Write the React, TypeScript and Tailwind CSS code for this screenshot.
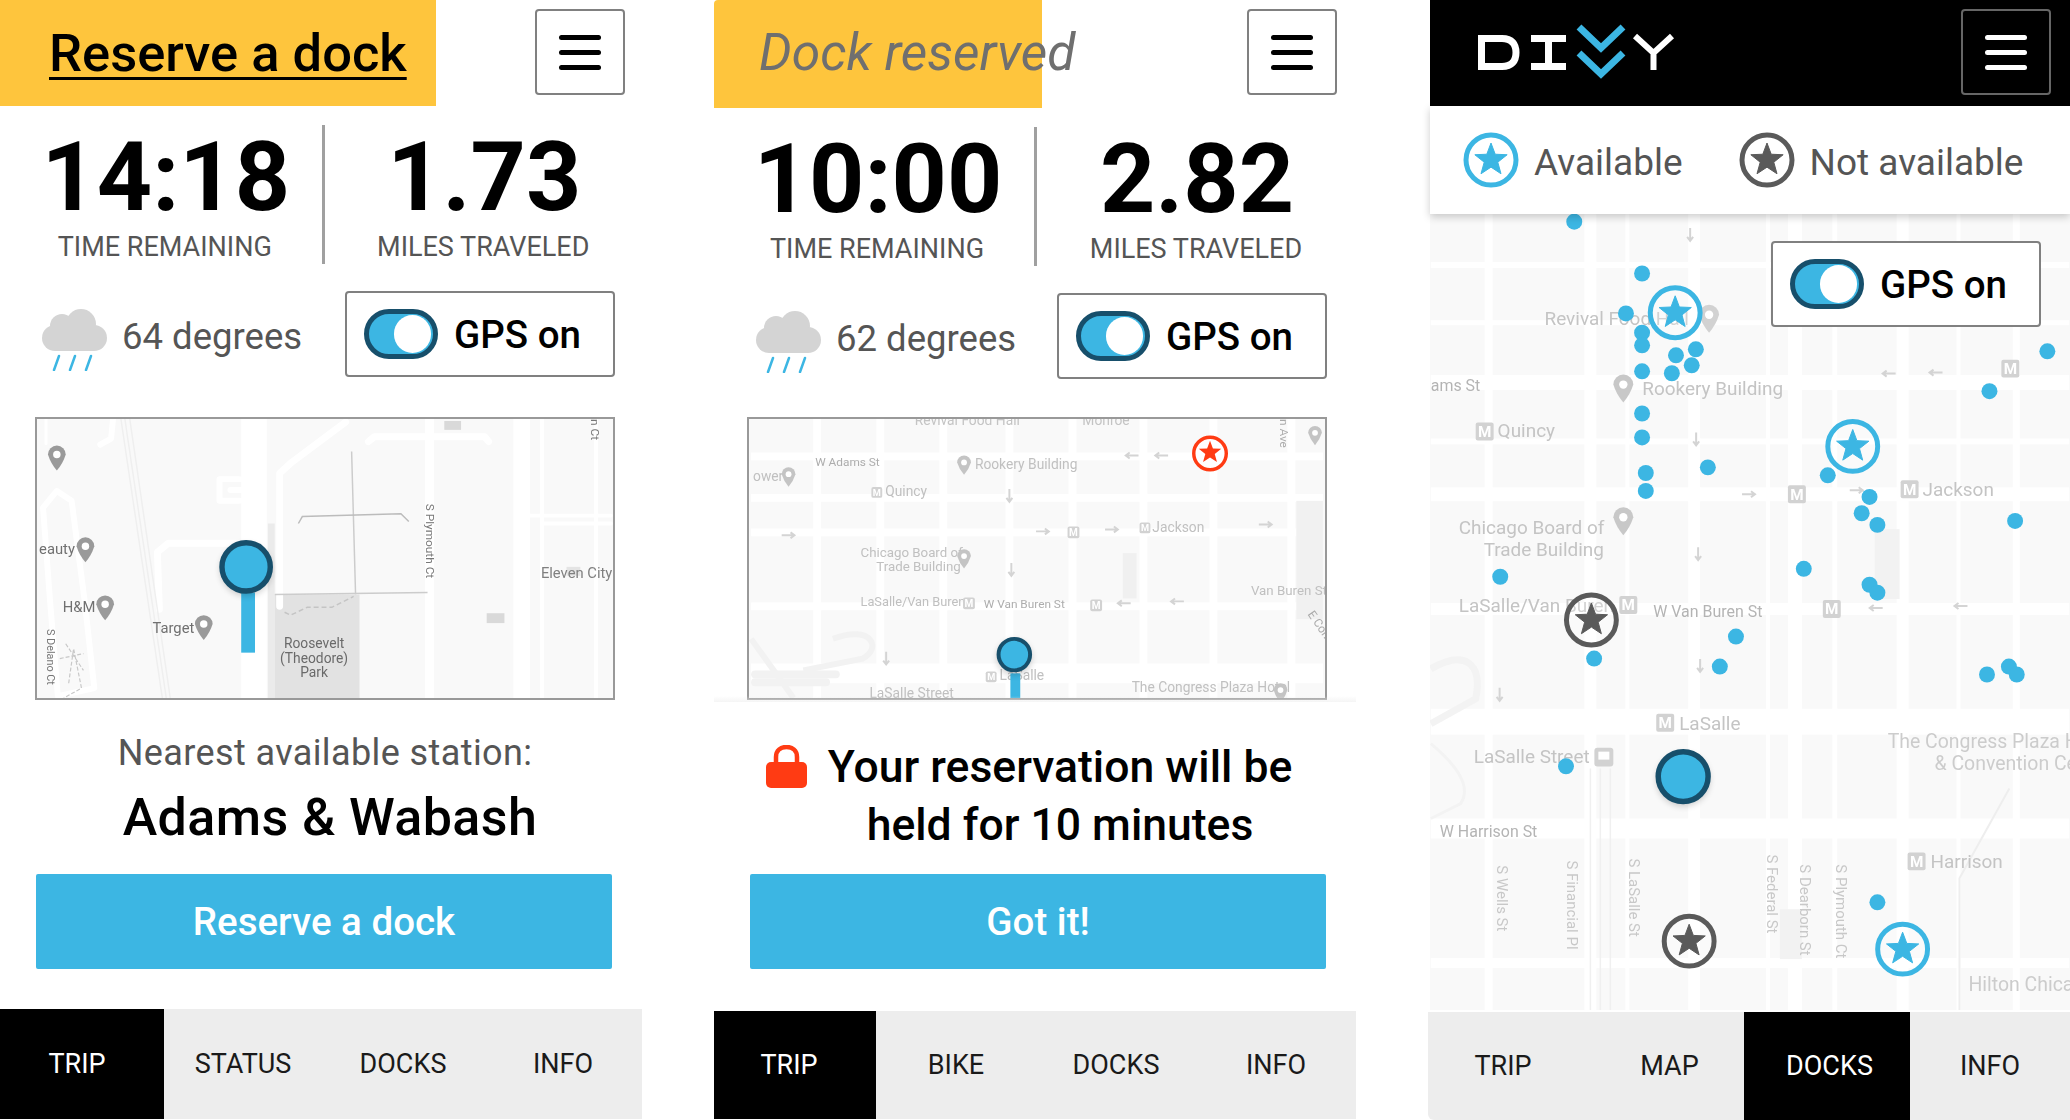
import React from "react";

const BLUE = "#3cb6e3";
const DARK = "#174f6b";
const GRAY = "#5a5a5a";

const starPts = (cx: number, cy: number, R: number) => {
  const pts: string[] = [];
  for (let i = 0; i < 10; i++) {
    const r = i % 2 === 0 ? R : R * 0.42;
    const a = -Math.PI / 2 + (i * Math.PI) / 5;
    pts.push(`${cx + r * Math.cos(a)},${cy + r * Math.sin(a)}`);
  }
  return pts.join(" ");
};

function Ring({ cx, cy, color, r = 25, sw = 5 }: { cx: number; cy: number; color: string; r?: number; sw?: number }) {
  return (
    <g>
      <circle cx={cx} cy={cy} r={r} fill="#ffffff" fillOpacity={0.25} stroke={color} strokeWidth={sw} />
      <polygon points={starPts(cx, cy, r * 0.68)} fill={color} strokeLinejoin="round" stroke={color} strokeWidth={1} />
    </g>
  );
}

function Hamburger({ dark = false, className = "" }: { dark?: boolean; className?: string }) {
  const line = dark ? "bg-white" : "bg-black";
  return (
    <div className={`w-[90px] h-[86px] rounded-[4px] border-[2.5px] flex flex-col items-center justify-center gap-[10px] ${dark ? "border-[#666666]" : "border-[#808080]"} ${className}`}>
      <div className={`w-[42px] h-[5px] rounded-full ${line}`} />
      <div className={`w-[42px] h-[5px] rounded-full ${line}`} />
      <div className={`w-[42px] h-[5px] rounded-full ${line}`} />
    </div>
  );
}

function Stats({ t, m, className = "" }: { t: string; m: string; className?: string }) {
  return (
    <div className={`flex mt-[19px] h-[139px] ${className}`}>
      <div className="w-[314px] pt-[12px] text-center">
        <div className="pl-[2px] text-[96.5px] leading-[80px] font-bold text-black">{t}</div>
        <div className="mt-[15px] text-[27px] leading-[30px] text-[#555555]">TIME REMAINING</div>
      </div>
      <div className="w-[3px] h-[139px] bg-[#a0a0a0]" />
      <div className="w-[318px] pt-[12px] text-center">
        <div className="pl-[2px] text-[96.5px] leading-[80px] font-bold text-black">{m}</div>
        <div className="mt-[15px] text-[27px] leading-[30px] text-[#555555]">MILES TRAVELED</div>
      </div>
    </div>
  );
}

function Toggle() {
  return (
    <div className="relative w-[74px] h-[50px] rounded-full border-[5px] border-[#174f6b] bg-[#3cb6e3]">
      <div className="absolute right-[2px] top-[1px] w-[37px] h-[38px] rounded-full bg-white" />
    </div>
  );
}

function GpsBox({ className = "" }: { className?: string }) {
  return (
    <div className={`w-[270px] h-[86px] rounded-[4px] border-[2.5px] border-[#808080] bg-white flex items-center pl-[17px] gap-[16px] ${className}`}>
      <Toggle />
      <span className="pt-[2px] text-[38.5px] leading-none font-medium text-black whitespace-nowrap">GPS on</span>
    </div>
  );
}

function Weather({ deg, boxClass }: { deg: string; boxClass: string }) {
  return (
    <div className="flex items-center mt-[27px] h-[86px]">
      <svg width="65" height="62" viewBox="0 0 65 62" className="ml-[42px] mt-[11px]">
        <circle cx="20" cy="17" r="12" fill="#d4d4d4" />
        <circle cx="39" cy="15" r="15" fill="#d4d4d4" />
        <rect x="0" y="16" width="65" height="26" rx="13" fill="#d4d4d4" />
        <path d="M17 47 L12 61 M33 47 L28 61 M49 47 L44 61" stroke={BLUE} strokeWidth="2.5" strokeLinecap="round" />
      </svg>
      <span className="ml-[15px] mt-[7px] text-[36.5px] leading-none text-[#555555] whitespace-nowrap">{deg}</span>
      <div className="flex-1" />
      <GpsBox className={boxClass} />
    </div>
  );
}

type Tab = { label: string; cls: string; active?: boolean };
function Nav({ tabs, className = "" }: { tabs: Tab[]; className?: string }) {
  return (
    <div className={`flex bg-[#ededed] rounded-bl-[6px] h-[108px] ${className}`}>
      {tabs.map((t) => (
        <div key={t.label} className={`flex items-center justify-center text-[27px] leading-none ${t.active ? "bg-black text-white" : "text-[#1a1a1a]"} ${t.cls}`}>
          {t.label}
        </div>
      ))}
    </div>
  );
}

function L({ x, y, s = 18, c = "#c4c4c4", w = 400, children, anchor }: { x: number; y: number; s?: number; c?: string; w?: number; children: React.ReactNode; anchor?: "middle" }) {
  return (
    <text x={x} y={y} fontSize={s} fill={c} fontWeight={w} textAnchor={anchor}>
      {children}
    </text>
  );
}
function V({ x, y, s = 15, c = "#c8c8c8", children }: { x: number; y: number; s?: number; c?: string; children: React.ReactNode }) {
  return (
    <text transform={`translate(${x} ${y}) rotate(90)`} fontSize={s} fill={c}>
      {children}
    </text>
  );
}
function M({ x, y, s = 18 }: { x: number; y: number; s?: number }) {
  return (
    <g>
      <rect x={x} y={y} width={s} height={s} rx={2} fill="#d2d2d2" />
      <text x={x + s / 2} y={y + s * 0.8} fontSize={s * 0.85} fontWeight={700} fill="#ffffff" textAnchor="middle">M</text>
    </g>
  );
}
function Poi({ x, y, r = 9, c = "#9a9a9a" }: { x: number; y: number; r?: number; c?: string }) {
  return (
    <g>
      <path d={`M${x - r} ${y} A${r} ${r} 0 1 1 ${x + r} ${y} Q${x + r * 0.7} ${y + r} ${x} ${y + r * 1.8} Q${x - r * 0.7} ${y + r} ${x - r} ${y} Z`} fill={c} />
      <circle cx={x} cy={y} r={r * 0.42} fill="#ffffff" />
    </g>
  );
}
function Arrow({ x, y, d }: { x: number; y: number; d: "l" | "r" | "d" }) {
  const p =
    d === "l"
      ? `M${x + 7} ${y} H${x - 6} M${x - 2} ${y - 3} L${x - 6} ${y} L${x - 2} ${y + 3}`
      : d === "r"
      ? `M${x - 7} ${y} H${x + 6} M${x + 2} ${y - 3} L${x + 6} ${y} L${x + 2} ${y + 3}`
      : `M${x} ${y - 7} V${y + 6} M${x - 3} ${y + 2} L${x} ${y + 6} L${x + 3} ${y + 2}`;
  return <path d={p} stroke="#d4d4d4" strokeWidth={2} fill="none" />;
}
function Pin({ cx, cy, r, sw }: { cx: number; cy: number; r: number; sw: number }) {
  return (
    <g>
      <circle cx={cx} cy={cy + 3} r={r + 2} fill="#000000" opacity={0.18} className="blur-[3px]" />
      <circle cx={cx} cy={cy} r={r} fill={BLUE} stroke={DARK} strokeWidth={sw} />
    </g>
  );
}

function Map1() {
  const road = { stroke: "#ffffff", fill: "none", strokeLinejoin: "round" as const, strokeLinecap: "round" as const };
  return (
    <svg viewBox="35 417 580 283" className="block w-full h-full bg-[#f9f9f9]">
      <g className="blur-[0.4px]">
        <rect x="240" y="417" width="26" height="283" fill="#ffffff" />
        <rect x="267" y="523" width="7" height="177" fill="#ebebeb" />
        <rect x="274" y="595" width="86" height="105" fill="#e2e2e2" />
        <path d="M279 607 V472 L290 462 L346 420" {...road} strokeWidth="7" />
        <path d="M157 610 L155 552 L166 543 H240" {...road} strokeWidth="7" />
        <path d="M238 478 H218 V500 H238 M229 489 H240" {...road} strokeWidth="6" />
        <path d="M110 417 L108 437 L97 443" {...road} strokeWidth="6" />
        <path d="M42 417 V442" {...road} strokeWidth="3" />
        <path d="M39 507 L53 490 L68 500 L81 600 L91 690 L54 698 L46 600 Z" {...road} strokeWidth="6" />
        <path d="M118 417 L160 700 M122 417 L164 700 M127 417 L168 700" stroke="#efefef" strokeWidth="1.5" fill="none" />
        <path d="M431 417 V700" {...road} strokeWidth="9" />
        <path d="M369 440 L375 435 H487 L491 440" {...road} strokeWidth="7" />
        <rect x="516" y="417" width="17" height="283" fill="#ffffff" />
        <path d="M545 417 V700 M600 417 V700" {...road} strokeWidth="4" />
        <path d="M533 515 H615 M545 523 H615" {...road} strokeWidth="4" />
        <path d="M352 450 L356 595 M274 595 L429 593" stroke="#cccccc" strokeWidth="1.5" fill="none" />
        <path d="M298 523 L302 516 L402 513 L410 521" stroke="#bcbcbc" strokeWidth="1.5" fill="none" />
        <path d="M284 613 L290 616 L307 608 L332 608 L354 597" stroke="#c4c4c4" strokeWidth="1.5" strokeDasharray="5 3" fill="none" />
        <path d="M62 645 L80 672 M56 660 L80 655 M65 685 L70 650 L78 690 L60 700" stroke="#c8c8c8" strokeWidth="1.2" strokeDasharray="4 2" fill="none" />
        <rect x="446" y="419" width="17" height="9" fill="#d9d9d9" />
        <rect x="489" y="614" width="18" height="10" fill="#d9d9d9" />
        <rect x="570" y="567" width="14" height="9" fill="#e4e4e4" />
        <Poi x={53} y={453} r={9} />
        <Poi x={82} y={546} r={9} />
        <Poi x={102} y={605} r={9} />
        <Poi x={202} y={625} r={9} />
        <L x={35} y={554} s={15} c="#707070">eauty</L>
        <L x={59} y={613} s={15} c="#707070">H&amp;M</L>
        <L x={150} y={634} s={15} c="#707070">Target</L>
        <L x={314} y={649} s={14} c="#6a6a6a" anchor="middle">Roosevelt</L>
        <L x={314} y={664} s={14} c="#6a6a6a" anchor="middle">(Theodore)</L>
        <L x={314} y={679} s={14} c="#6a6a6a" anchor="middle">Park</L>
        <L x={544} y={578} s={15} c="#808080">Eleven City</L>
        <V x={43} y={630} s={11} c="#777777">S Delano Ct</V>
        <V x={427} y={503} s={12} c="#777777">S Plymouth Ct</V>
        <V x={595} y={417} s={12} c="#777777">n Ct</V>
      </g>
      <rect x="240" y="593" width="14" height="61" fill={BLUE} />
      <Pin cx={245} cy={567} r={24.5} sw={5.5} />
    </svg>
  );
}

function Map2() {
  const h = [455, 497, 532, 607, 675];
  const v = [814, 878, 942, 1009, 1073, 1145, 1216, 1295];
  return (
    <svg viewBox="747 417 580 283" className="block w-full h-full bg-[#f9f9f9]">
      <g className="blur-[0.3px]">
        {h.map((y, i) => (
          <rect key={y} x="747" y={y - (i === 4 ? 10 : 4)} width="580" height={i === 4 ? 20 : 8} fill="#ffffff" />
        ))}
        {v.map((x) => (
          <rect key={x} x={x - 4} y="417" width="8" height="283" fill="#ffffff" />
        ))}
        <rect x="1124" y="553" width="14" height="46" fill="#f0f0f0" />
        <path d="M747 640 L790 700 M830 640 C870 625 880 650 860 660 L800 672" stroke="#f2f2f2" strokeWidth="6" fill="none" />
        <rect x="747" y="672" width="90" height="8" rx="4" fill="#f2f2f2" />
        <rect x="747" y="680" width="80" height="8" rx="4" fill="#f2f2f2" />
        <rect x="1300" y="500" width="27" height="120" fill="#f1f1f1" />
        <L x={913} y={423} s={14} c="#c4c4c4">Revival Food Hall</L>
        <L x={1083} y={423} s={14} c="#c4c4c4">Monroe</L>
        <L x={812} y={465} s={12} c="#adadad">W Adams St</L>
        <L x={749} y={480} s={14} c="#c0c0c0">ower</L>
        <L x={974} y={468} s={14} c="#c0c0c0">Rookery Building</L>
        <L x={883} y={495} s={14} c="#c0c0c0">Quincy</L>
        <L x={1154} y={532} s={14} c="#c0c0c0">Jackson</L>
        <L x={858} y={557} s={13.5} c="#c0c0c0">Chicago Board of</L>
        <L x={874} y={571} s={13.5} c="#c0c0c0">Trade Building</L>
        <L x={858} y={607} s={13} c="#c0c0c0">LaSalle/Van Buren</L>
        <L x={983} y={609} s={12} c="#adadad">W Van Buren St</L>
        <L x={1254} y={596} s={13.5} c="#c0c0c0">Van Buren St</L>
        <L x={999} y={682} s={14} c="#c0c0c0">LaSalle</L>
        <L x={1133} y={694} s={14} c="#c0c0c0">The Congress Plaza Hotel</L>
        <L x={867} y={700} s={14} c="#c0c0c0">LaSalle Street</L>
        <V x={1283} y={417} s={12} c="#aaaaaa">n Ave</V>
        <text transform="translate(1311 615) rotate(55)" fontSize={12} fill="#aaaaaa">E Con</text>
        <M x={869} y={486} s={11} />
        <M x={1068} y={526} s={12} />
        <M x={1141} y={522} s={11} />
        <M x={962} y={598} s={12} />
        <M x={1091} y={600} s={12} />
        <M x={985} y={673} s={11} />
        <Poi x={963} y={461} r={7} c="#c4c4c4" />
        <Poi x={785} y={473} r={7} c="#c4c4c4" />
        <Poi x={963} y={556} r={7} c="#c4c4c4" />
        <Poi x={1319} y={431} r={7} c="#c4c4c4" />
        <Poi x={1284} y={692} r={7} c="#c4c4c4" />
        <Arrow x={1133} y={454} d="l" />
        <Arrow x={1163} y={454} d="l" />
        <Arrow x={785} y={535} d="r" />
        <Arrow x={1043} y={531} d="r" />
        <Arrow x={1113} y={529} d="r" />
        <Arrow x={1269} y={524} d="r" />
        <Arrow x={1009} y={495} d="d" />
        <Arrow x={1011} y={570} d="d" />
        <Arrow x={884} y={660} d="d" />
        <Arrow x={1125} y={604} d="l" />
        <Arrow x={1179} y={602} d="l" />
      </g>
      <circle cx="1212.5" cy="452" r="16.5" fill="#ffffff" stroke="#ff3b13" strokeWidth="3.5" />
      <polygon points={starPts(1212.5, 451, 12)} fill="#ff3b13" />
      <rect x="1010" y="675" width="10" height="25" fill={BLUE} />
      <Pin cx={1014} cy={656} r={16} sw={4} />
    </svg>
  );
}

const z4 = [[371,665],[535,821],[496,941],[535,999],[535,1037],[617,1067],[665,1049],[655,1097],[535,1115],[607,1121],[1515,1055],[1375,1175]];
const z5 = [[535,42],[535,114],[544,221],[544,275],[694,204],[984,228],[1085,293],[1066,342],[1104,377],[1437,365],[192,533],[926,509],[1085,557],[1104,581],[762,713],[723,803],[419,779],[1369,827],[1422,803],[1441,827],[351,1103]];
const dots = [
  ...z4.map(([x, y]) => [1420 + x / 2.412, y / 3]),
  ...z5.map(([x, y]) => [1420 + x / 2.412, 400 + y / 3]),
  [1420 + 1104 / 2.412, 780 + 372 / 3],
];

function Map3() {
  const hs: [number, number][] = [[265, 6], [323, 5], [383, 15], [442, 6], [495, 14], [610, 12], [723, 26], [830, 20], [965, 10]];
  const vs: [number, number][] = [[1488, 8], [1590, 12], [1627, 4], [1694, 12], [1768, 4], [1795, 14], [1835, 5], [1903, 12], [1959, 4], [2017, 7]];
  return (
    <svg viewBox="1430 214 640 798" className="block w-full h-full bg-[#f9f9f9]">
      <g className="blur-[0.3px]">
        {hs.map(([y, t]) => (
          <rect key={y} x="1430" y={y - t / 2} width="640" height={t} fill="#ffffff" />
        ))}
        {vs.map(([x, t]) => (
          <rect key={x} x={x - t / 2} y="214" width={t} height="798" fill="#ffffff" />
        ))}
        <rect x="1875" y="530" width="25" height="70" fill="#f2f2f2" />
        <rect x="1780" y="911" width="22" height="50" fill="#f2f2f2" />
        <path d="M1430 670 C1465 650 1482 665 1475 700 L1430 725" stroke="#f3f3f3" strokeWidth="7" fill="none" />
        <path d="M1430 745 C1460 770 1470 790 1460 805 L1430 820" stroke="#f3f3f3" strokeWidth="3" fill="none" />
        <path d="M1590 770 V1012 M1600 770 V1012 M1610 770 V1012" stroke="#f0f0f0" strokeWidth="1.5" />
        <path d="M1960 1012 V880 L2010 790" stroke="#eeeeee" strokeWidth="2" fill="none" />
        <L x={1544} y={325} s={19}>Revival Food Hall</L>
        <L x={1642} y={395} s={19}>Rookery Building</L>
        <L x={1430} y={391} s={16} c="#b4b4b4">ams St</L>
        <L x={1497} y={438} s={19}>Quincy</L>
        <L x={1458} y={535} s={19}>Chicago Board of</L>
        <L x={1483} y={557} s={19}>Trade Building</L>
        <L x={1458} y={613} s={19}>LaSalle/Van Buren</L>
        <L x={1653} y={618} s={16} c="#b4b4b4">W Van Buren St</L>
        <L x={1923} y={497} s={19}>Jackson</L>
        <L x={1679} y={731} s={19}>LaSalle</L>
        <L x={1888} y={749} s={19.5} c="#cccccc">The Congress Plaza Hotel</L>
        <L x={1935} y={771} s={19.5} c="#cccccc">&amp; Convention Center</L>
        <L x={1473} y={764} s={19}>LaSalle Street</L>
        <L x={1439} y={839} s={16} c="#b4b4b4">W Harrison St</L>
        <L x={1931} y={870} s={19}>Harrison</L>
        <L x={1969} y={993} s={19.5} c="#cccccc">Hilton Chicago</L>
        <V x={1496} y={867}>S Wells St</V>
        <V x={1567} y={862}>S Financial Pl</V>
        <V x={1629} y={860}>S LaSalle St</V>
        <V x={1767} y={856}>S Federal St</V>
        <V x={1800} y={866}>S Dearborn St</V>
        <V x={1836} y={866}>S Plymouth Ct</V>
        <M x={1475} y={423} />
        <M x={1901} y={481} />
        <M x={1788} y={486} />
        <M x={1619} y={597} />
        <M x={1823} y={601} />
        <M x={1656} y={715} />
        <M x={1908} y={854} />
        <M x={2002} y={360} />
        <rect x="1594" y="749" width="19" height="19" rx="3" fill="#d2d2d2" />
        <rect x="1598" y="753" width="11" height="8" fill="#ffffff" />
        <Poi x={1623} y={518} r={10} c="#c8c8c8" />
        <Poi x={1709} y={315} r={10} c="#d2d2d2" />
        <Poi x={1623} y={385} r={10} c="#c8c8c8" />
        <Arrow x={1690} y={235} d="d" />
        <Arrow x={1696} y={440} d="d" />
        <Arrow x={1698} y={555} d="d" />
        <Arrow x={1700} y={667} d="d" />
        <Arrow x={1499} y={696} d="d" />
        <Arrow x={1889} y={374} d="l" />
        <Arrow x={1936} y={373} d="l" />
        <Arrow x={1749} y={495} d="r" />
        <Arrow x={1857} y={491} d="r" />
        <Arrow x={1876} y={609} d="l" />
        <Arrow x={1961} y={607} d="l" />
      </g>
      {dots.map(([x, y], i) => (
        <circle key={i} cx={x} cy={y} r={8} fill={BLUE} />
      ))}
      <Ring cx={1675} cy={313} color={BLUE} />
      <Ring cx={1853} cy={447} color={BLUE} />
      <Ring cx={1903} cy={951} color={BLUE} />
      <Ring cx={1591} cy={621} color={GRAY} />
      <Ring cx={1689} cy={943} color={GRAY} />
      <Pin cx={1683} cy={778} r={25} sw={5.5} />
    </svg>
  );
}

function Logo() {
  return (
    <svg width="200" height="60" viewBox="1474 22 200 60" className="ml-[46px]">
      <path d="M1479.5 37.5 H1500 C1510 37.5 1514 43 1514 51.5 C1514 60 1510 65.5 1500 65.5 H1479.5 Z" fill="none" stroke="#ffffff" strokeWidth="7" />
      <path d="M1529 37.5 H1564 M1529 65.5 H1564 M1546.5 37 V66" fill="none" stroke="#ffffff" strokeWidth="7" />
      <path d="M1577 26 L1599 47 L1621 26" fill="none" stroke={BLUE} strokeWidth="7" />
      <path d="M1577 52 L1599 73 L1621 52" fill="none" stroke={BLUE} strokeWidth="7" />
      <path d="M1633 35 L1651.5 52 L1670 35 M1651.5 52 V69" fill="none" stroke="#ffffff" strokeWidth="6" />
    </svg>
  );
}

export default function App() {
  return (
    <div className="flex w-[2070px] h-[1120px] overflow-hidden bg-white font-['Roboto',sans-serif]">
      {/* Phone 1 */}
      <div className="w-[642px] flex flex-col">
        <div className="flex items-start justify-between h-[106px]">
          <div className="w-[436px] h-[106px] bg-[#fec53d] pl-[49px] flex items-center">
            <span className="text-[52.5px] leading-none font-medium text-black whitespace-nowrap underline decoration-[3px] underline-offset-[6px]">Reserve a dock</span>
          </div>
          <Hamburger className="mt-[9px] mr-[17px] bg-white" />
        </div>
        <Stats t="14:18" m="1.73" className="ml-[8px]" />
        <Weather deg="64 degrees" boxClass="mr-[27px]" />
        <div className="ml-[35px] mt-[40px] w-[580px] h-[283px] border-2 border-[#999999] overflow-hidden">
          <Map1 />
        </div>
        <div className="text-center">
          <div className="pl-[8px] mt-[32px] text-[36px] leading-[42px] text-[#555555] whitespace-nowrap tracking-[0.4px]">Nearest available station:</div>
          <div className="pl-[18px] mt-[14px] text-[52px] leading-[60px] font-medium text-black whitespace-nowrap tracking-[0.4px]">Adams &amp; Wabash</div>
        </div>
        <div className="ml-[36px] mt-[26px] w-[576px] h-[95px] rounded-[2px] bg-[#3cb6e3] flex items-center justify-center text-[38.5px] font-medium text-white">Reserve a dock</div>
        <Nav
          className="mt-[40px] h-[110px]"
          tabs={[
            { label: "TRIP", cls: "w-[164px] pr-[10px]", active: true },
            { label: "STATUS", cls: "w-[158px]" },
            { label: "DOCKS", cls: "w-[162px]" },
            { label: "INFO", cls: "w-[158px]" },
          ]}
        />
      </div>

      {/* Phone 2 */}
      <div className="ml-[72px] w-[642px] flex flex-col">
        <div className="flex items-start justify-between h-[108px]">
          <div className="w-[328px] h-[108px] bg-[#fec53d] rounded-tl-[4px] pl-[45px] pb-[3px] flex items-center">
            <span className="text-[51.5px] leading-none italic text-[#6f6f6f] whitespace-nowrap">Dock reserved</span>
          </div>
          <Hamburger className="mt-[9px] mr-[19px] bg-white" />
        </div>
        <Stats t="10:00" m="2.82" className="ml-[6px]" />
        <Weather deg="62 degrees" boxClass="mr-[29px]" />
        <div className="ml-[33px] mt-[38px] w-[580px] h-[283px] border-2 border-[#999999] overflow-hidden">
          <Map2 />
        </div>
        <div className="relative flex items-start pt-[38px]">
          <div className="absolute left-0 right-0 -top-[4px] h-[6px] bg-gradient-to-b from-transparent to-[#eeeeee] opacity-60" />
          <svg width="41" height="43" viewBox="0 0 41 43" className="ml-[52px] mt-[7px]">
            <path d="M10 20 V12 C10 5 15 2 20.5 2 C26 2 31 5 31 12 V20" fill="none" stroke="#ff3b13" strokeWidth="4.5" />
            <rect x="0" y="17" width="41" height="26" rx="5" fill="#ff3b13" />
          </svg>
          <div className="ml-[17px] w-[472px] text-center text-[44.5px] leading-[58px] font-medium text-black whitespace-nowrap">
            <div>Your reservation will be</div>
            <div>held for 10 minutes</div>
          </div>
        </div>
        <div className="ml-[36px] mt-[20px] w-[576px] h-[95px] rounded-[2px] bg-[#3cb6e3] flex items-center justify-center text-[38.5px] font-medium text-white">Got it!</div>
        <Nav
          className="mt-[42px]"
          tabs={[
            { label: "TRIP", cls: "w-[162px] pr-[12px]", active: true },
            { label: "BIKE", cls: "w-[160px]" },
            { label: "DOCKS", cls: "w-[160px]" },
            { label: "INFO", cls: "w-[160px]" },
          ]}
        />
      </div>

      {/* Phone 3 */}
      <div className="ml-[72px] w-[642px] flex flex-col">
        <div className="ml-[2px] h-[106px] bg-black flex items-start justify-between">
          <div className="h-[106px] flex items-center">
            <Logo />
          </div>
          <Hamburger dark className="mt-[9px] mr-[19px]" />
        </div>
        <div className="relative z-10 ml-[2px] h-[108px] bg-white shadow-[0_3px_8px_rgba(0,0,0,0.2)] flex items-center pl-[33px] text-[37px] leading-none text-[#555555]">
          <svg width="56" height="56" viewBox="0 0 56 56">
            <Ring cx={28} cy={28} color={BLUE} />
          </svg>
          <span className="ml-[15px] mt-[4px] whitespace-nowrap">Available</span>
          <svg width="56" height="56" viewBox="0 0 56 56" className="ml-[56px]">
            <Ring cx={28} cy={28} color={GRAY} />
          </svg>
          <span className="ml-[15px] mt-[4px] whitespace-nowrap">Not available</span>
        </div>
        <div className="relative ml-[2px] h-[796px] overflow-hidden">
          <Map3 />
          <GpsBox className="absolute left-[341px] top-[27px]" />
        </div>
        <div className="h-[2px]" />
        <Nav
          tabs={[
            { label: "TRIP", cls: "w-[150px]" },
            { label: "MAP", cls: "w-[166px] pl-[17px]" },
            { label: "DOCKS", cls: "w-[166px] pl-[5px]", active: true },
            { label: "INFO", cls: "w-[160px]" },
          ]}
        />
      </div>
    </div>
  );
}
